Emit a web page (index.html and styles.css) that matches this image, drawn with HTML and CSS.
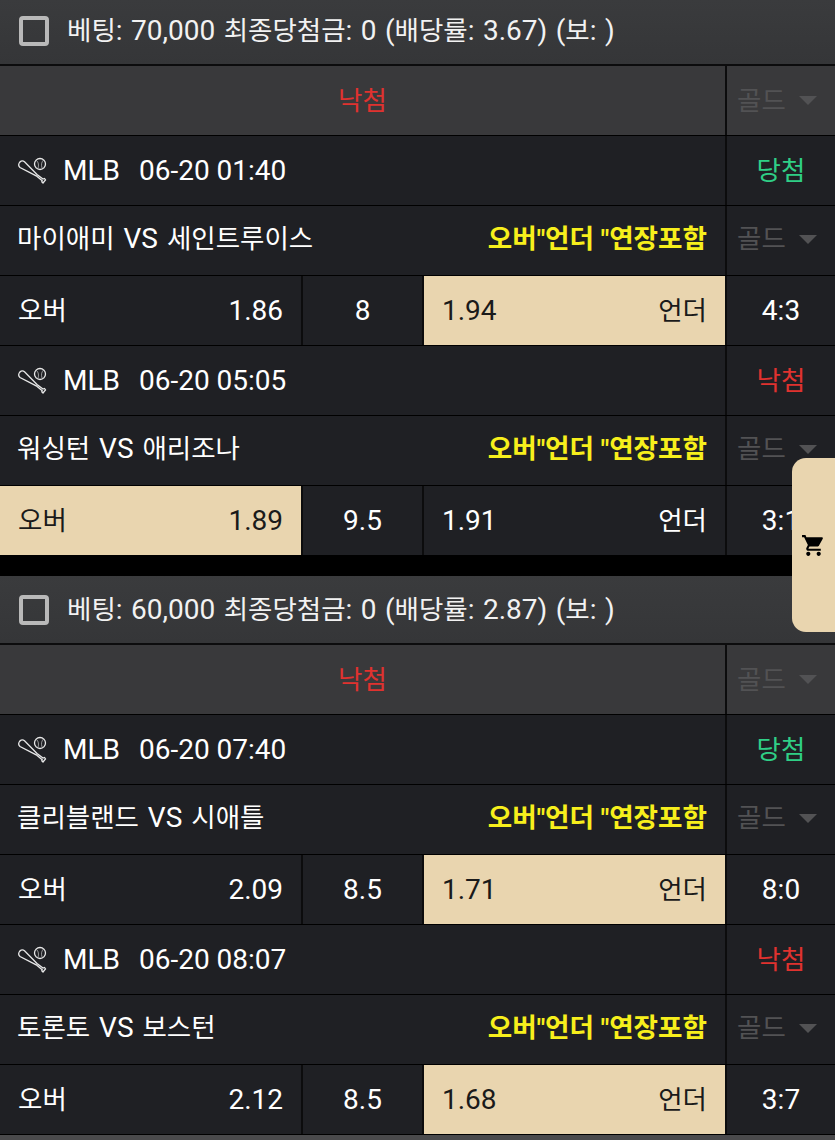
FILE: index.html
```html
<!DOCTYPE html>
<html lang="ko">
<head>
    <meta charset="UTF-8">
    <meta name="viewport" content="width=device-width, initial-scale=1.0">
    <title>베팅내역</title>
    <link rel="stylesheet" href="styles.css">
</head>
<body>
    <svg class="defs" width="0" height="0">
        <symbol id="bat" viewBox="0 0 30 30">
            <path d="M2.500 6.500c1.500-2 3.500-2 5-.8L20 18.500l6 4.500 1.500-.5 1 1.500-2.500 3-1.200-1.200.4-1-6-5L3 11.500c-1.300-1.200-1.500-3.500-.5-5z" fill="none" stroke="#e8e8e8" stroke-width="1.300"/>
            <circle cx="23" cy="8" r="5.500" fill="none" stroke="#e8e8e8" stroke-width="1.300"/>
            <path d="M19.500 4.500c2 2 2.500 4.500 1.500 8M26.500 4c-2 2-2.500 4.500-1.500 8" fill="none" stroke="#e8e8e8" stroke-width="0.600"/>
        </symbol>
    </svg>

    <div class="bet first">
        <div class="bet-head">
            <span class="check"></span>
            <span><span class="ko">베팅</span>: 70,000 <span class="ko">최종당첨금</span>: 0 (<span class="ko">배당률</span>: 3.67) (<span class="ko">보</span>: )</span>
        </div>
        <div class="row result-row">
            <div class="main result lose ko">낙첨</div>
            <div class="side gold ko">골드<i class="arrow"></i></div>
        </div>

        <div class="row">
            <div class="main info"><svg class="bat"><use href="#bat"/></svg><span class="league">MLB</span><span>06-20 01:40</span></div>
            <div class="side win ko">당첨</div>
        </div>
        <div class="row">
            <div class="main teams"><span><span class="ko">마이애미</span> VS <span class="ko">세인트루이스</span></span><b>오버"언더 "연장포함</b></div>
            <div class="side gold ko">골드<i class="arrow"></i></div>
        </div>
        <div class="row">
            <div class="main odds">
                <div class="pick"><span class="ko">오버</span><span>1.86</span></div>
                <div class="line">8</div>
                <div class="pick on"><span>1.94</span><span class="ko">언더</span></div>
            </div>
            <div class="side score">4:3</div>
        </div>

        <div class="row">
            <div class="main info"><svg class="bat"><use href="#bat"/></svg><span class="league">MLB</span><span>06-20 05:05</span></div>
            <div class="side lose ko">낙첨</div>
        </div>
        <div class="row">
            <div class="main teams"><span><span class="ko">워싱턴</span> VS <span class="ko">애리조나</span></span><b>오버"언더 "연장포함</b></div>
            <div class="side gold ko">골드<i class="arrow"></i></div>
        </div>
        <div class="row">
            <div class="main odds">
                <div class="pick on"><span class="ko">오버</span><span>1.89</span></div>
                <div class="line">9.5</div>
                <div class="pick"><span>1.91</span><span class="ko">언더</span></div>
            </div>
            <div class="side score">3:1</div>
        </div>
    </div>

    <div class="bet">
        <div class="bet-head">
            <span class="check"></span>
            <span><span class="ko">베팅</span>: 60,000 <span class="ko">최종당첨금</span>: 0 (<span class="ko">배당률</span>: 2.87) (<span class="ko">보</span>: )</span>
        </div>
        <div class="row result-row">
            <div class="main result lose ko">낙첨</div>
            <div class="side gold ko">골드<i class="arrow"></i></div>
        </div>

        <div class="row">
            <div class="main info"><svg class="bat"><use href="#bat"/></svg><span class="league">MLB</span><span>06-20 07:40</span></div>
            <div class="side win ko">당첨</div>
        </div>
        <div class="row">
            <div class="main teams"><span><span class="ko">클리블랜드</span> VS <span class="ko">시애틀</span></span><b>오버"언더 "연장포함</b></div>
            <div class="side gold ko">골드<i class="arrow"></i></div>
        </div>
        <div class="row">
            <div class="main odds">
                <div class="pick"><span class="ko">오버</span><span>2.09</span></div>
                <div class="line">8.5</div>
                <div class="pick on"><span>1.71</span><span class="ko">언더</span></div>
            </div>
            <div class="side score">8:0</div>
        </div>

        <div class="row">
            <div class="main info"><svg class="bat"><use href="#bat"/></svg><span class="league">MLB</span><span>06-20 08:07</span></div>
            <div class="side lose ko">낙첨</div>
        </div>
        <div class="row">
            <div class="main teams"><span><span class="ko">토론토</span> VS <span class="ko">보스턴</span></span><b>오버"언더 "연장포함</b></div>
            <div class="side gold ko">골드<i class="arrow"></i></div>
        </div>
        <div class="row">
            <div class="main odds">
                <div class="pick"><span class="ko">오버</span><span>2.12</span></div>
                <div class="line">8.5</div>
                <div class="pick on"><span>1.68</span><span class="ko">언더</span></div>
            </div>
            <div class="side score">3:7</div>
        </div>
    </div>

    <div class="cart-tab">
        <svg class="cart" viewBox="0 0 24 24"><path d="M7 18c-1.100 0-1.990.9-1.990 2S5.900 22 7 22s2-.9 2-2-.9-2-2-2zM1 2v2h2l3.600 7.590-1.350 2.450c-.16.28-.25.61-.25.96 0 1.100.9 2 2 2h12v-2H7.420c-.14 0-.25-.11-.25-.25l.03-.12.9-1.630h7.450c.75 0 1.410-.41 1.750-1.030l3.580-6.490c.08-.14.12-.31.12-.48 0-.55-.45-1-1-1H5.210l-.94-2H1zm16 16c-1.100 0-1.990.9-1.990 2s.89 2 1.990 2 2-.9 2-2-.9-2-2-2z"/></svg>
    </div>
</body>
</html>
```

FILE: styles.css
```css
html, body {
    margin: 0;
    padding: 0;
}
body {
    position: relative;
    width: 835px;
    height: 1140px;
    overflow: hidden;
    background-color: #4a4a4c;
    color: #ffffff;
    font-family: Roboto, "Noto Sans CJK KR", sans-serif;
    font-size: 28px;
    line-height: 32px;
}
.ko {
    font-size: 26.5px;
}
.defs {
    position: absolute;
}
.bet {
    display: flow-root;
    background-color: #000000;
}
.bet.first {
    padding-bottom: 20px;
}
.bet-head {
    display: flex;
    align-items: center;
    gap: 18px;
    box-sizing: border-box;
    height: 69px;
    padding-left: 19px;
    background: linear-gradient(#3a3b3d, #353638);
    border-bottom: 2px solid #0c0c0d;
    color: #f2f2f2;
    word-spacing: 1.5px;
}
.bet.first .bet-head {
    height: 66px;
    padding-bottom: 3px;
}
.check {
    box-sizing: border-box;
    width: 30px;
    height: 30px;
    border: 4px solid #b9b9b9;
    border-radius: 4px;
}
.row {
    display: flex;
    height: 69px;
    margin-bottom: 1px;
    background-color: #1f2024;
}
.main {
    display: flex;
    align-items: center;
    box-sizing: border-box;
    width: 725px;
    height: 69px;
}
.side {
    display: flex;
    align-items: center;
    justify-content: center;
    box-sizing: border-box;
    width: 108px;
    margin-left: 2px;
    background-color: #1f2024;
    box-shadow: -2px 0 0 #0c0c0d;
}
.side.gold {
    justify-content: flex-start;
    padding-left: 10px;
}
.teams + .side.gold {
    padding-bottom: 3px;
}
.result-row,
.result-row .side {
    background-color: #39393b;
}
.result {
    justify-content: center;
}
.info {
    padding-left: 17px;
}
.bat {
    width: 30px;
    height: 30px;
    margin-right: 16px;
}
.league {
    margin-right: 19px;
}
.teams {
    justify-content: space-between;
    padding: 0 18px 3px 17px;
    word-spacing: 2px;
}
.teams b {
    color: #f7ef1c;
    font-weight: 700;
    font-size: 26.6px;
    word-spacing: 0;
}
.odds {
    background-color: #0c0c0d;
}
.pick {
    display: flex;
    align-items: center;
    justify-content: space-between;
    box-sizing: border-box;
    width: 301px;
    height: 100%;
    padding: 0 18px;
    background-color: #1f2024;
}
.pick.on {
    background-color: #e9d5af;
    color: #1a1a1a;
}
.line {
    display: flex;
    align-items: center;
    justify-content: center;
    width: 119px;
    height: 100%;
    margin: 0 2px;
    background-color: #1f2024;
}
.lose {
    color: #e0322f;
}
.win {
    color: #2fcf86;
}
.gold {
    color: #525254;
}
.arrow {
    width: 0;
    height: 0;
    margin-left: 13px;
    border-left: 9px solid transparent;
    border-right: 9px solid transparent;
    border-top: 9px solid #525254;
}
.cart-tab {
    position: absolute;
    top: 458px;
    right: 0;
    display: flex;
    align-items: center;
    width: 43px;
    height: 174px;
    padding-left: 9px;
    box-sizing: border-box;
    background-color: #e9d5af;
    border-radius: 14px 0 0 14px;
}
.cart {
    width: 25px;
    height: 25px;
    fill: #000000;
}
```
